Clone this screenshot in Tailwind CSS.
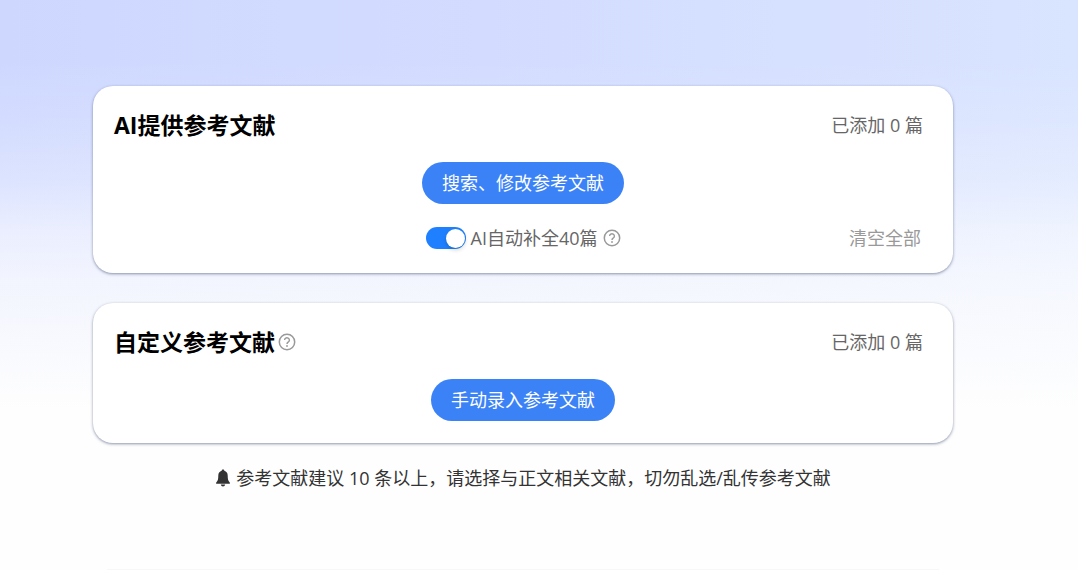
<!DOCTYPE html>
<html lang="zh-CN">
<head>
    <meta charset="UTF-8">
    <meta name="viewport" content="width=device-width, initial-scale=1.0">
    <title>参考文献</title>
    <script src="https://cdn.jsdelivr.net/npm/@tailwindcss/browser@4"></script>
</head>
<body class="bg-[#fefefe] font-['Open_Sans','Noto_Sans_CJK_SC',sans-serif] text-[18px] leading-[22px] text-[#666]">
    <!-- icons -->
    <svg class="hidden">
        <symbol id="icon-question" viewBox="0 0 18 18">
            <circle cx="9" cy="9" r="7.7" fill="none" stroke="currentColor" stroke-width="1.5" />
            <path d="M6.6 7.1a2.4 2.3 0 1 1 3.7 1.9C9.5 9.6 9 9.9 9 10.9" fill="none" stroke="currentColor" stroke-width="1.4" />
            <circle cx="9" cy="13" r="0.9" fill="currentColor" />
        </symbol>
    </svg>

    <main class="min-h-screen bg-[linear-gradient(to_bottom,#fefefe00_60px,#fefefe1f_120px,#fefefe4d_180px,#fefefe94_230px,#fefefec0_280px,#fefefe_410px),linear-gradient(to_right,#ced8ff,#d3dcff_45%,#d9e4ff)] pt-[86px] pr-8">
        <div class="mx-auto max-w-[860px]">
            <section class="rounded-[20px] bg-white pt-[22px] pb-6 shadow-[0_1px_3px_rgba(30,45,90,0.5)]">
                <div class="flex h-[34px] items-center justify-between pr-[30px] pl-[21px]">
                    <h2 class="text-[23px] font-bold text-black">AI提供参考文献</h2>
                    <span>已添加 0 篇</span>
                </div>
                <div class="mt-5 flex justify-center">
                    <button type="button" class="h-[42px] rounded-full bg-[#3b82f6] px-5 text-white">搜索、修改参考文献</button>
                </div>
                <div class="mt-[23px] grid h-[22px] grid-cols-[1fr_auto_1fr] items-center pr-8 pl-8">
                    <div class="col-start-2 flex items-center">
                        <input
                            id="auto-fill"
                            type="checkbox"
                            role="switch"
                            checked
                            class="flex h-[22px] w-10 cursor-pointer appearance-none items-center rounded-full bg-gray-300 px-px before:size-[19px] before:rounded-full before:bg-white before:shadow-[0_2px_4px_rgba(0,35,11,0.2)] checked:justify-end checked:bg-[#1f80ff]"
                        >
                        <label for="auto-fill" class="ml-[5px]">AI自动补全40篇</label>
                        <svg class="ml-[5px] size-[18px] text-[#999]"><use href="#icon-question" /></svg>
                    </div>
                    <button type="button" class="justify-self-end text-[#999]">清空全部</button>
                </div>
            </section>

            <section class="mt-[30px] rounded-[20px] bg-white pt-[22px] pb-[22px] shadow-[0_1px_3px_rgba(30,45,90,0.5)]">
                <div class="flex h-[34px] items-center justify-between pr-[30px] pl-[21px]">
                    <h2 class="flex items-center text-[23px] font-bold text-black">
                        自定义参考文献
                        <svg class="ml-[3px] size-[18px] text-[#999]"><use href="#icon-question" /></svg>
                    </h2>
                    <span>已添加 0 篇</span>
                </div>
                <div class="mt-5 flex justify-center">
                    <button type="button" class="h-[42px] rounded-full bg-[#3b82f6] px-5 text-white">手动录入参考文献</button>
                </div>
            </section>

            <p class="mt-6 flex items-center justify-center text-[#333]">
                <svg class="mr-[5px] h-[18px] w-4" viewBox="0 0 16 18" fill="currentColor">
                    <path d="M8 .5c.8 0 1.3.5 1.3 1.3 2.2.6 3.4 2.4 3.4 4.8 0 3.9.5 5.4 2.2 7.2.3.3.1.9-.4.9H1.500c-.5 0-.7-.6-.4-.9C2.800 12 3.300 10.500 3.300 6.600c0-2.400 1.200-4.200 3.400-4.800C6.700 1 7.200.5 8 .5z" />
                    <path d="M5.8 15.500h4.400c-.2 1.200-1.100 2-2.200 2s-2-.8-2.200-2z" />
                </svg>
                参考文献建议 10 条以上，请选择与正文相关文献，切勿乱选/乱传参考文献
            </p>

            <hr class="mx-[14px] mt-20 border-[#f7f7f7]">
        </div>
    </main>
</body>
</html>
